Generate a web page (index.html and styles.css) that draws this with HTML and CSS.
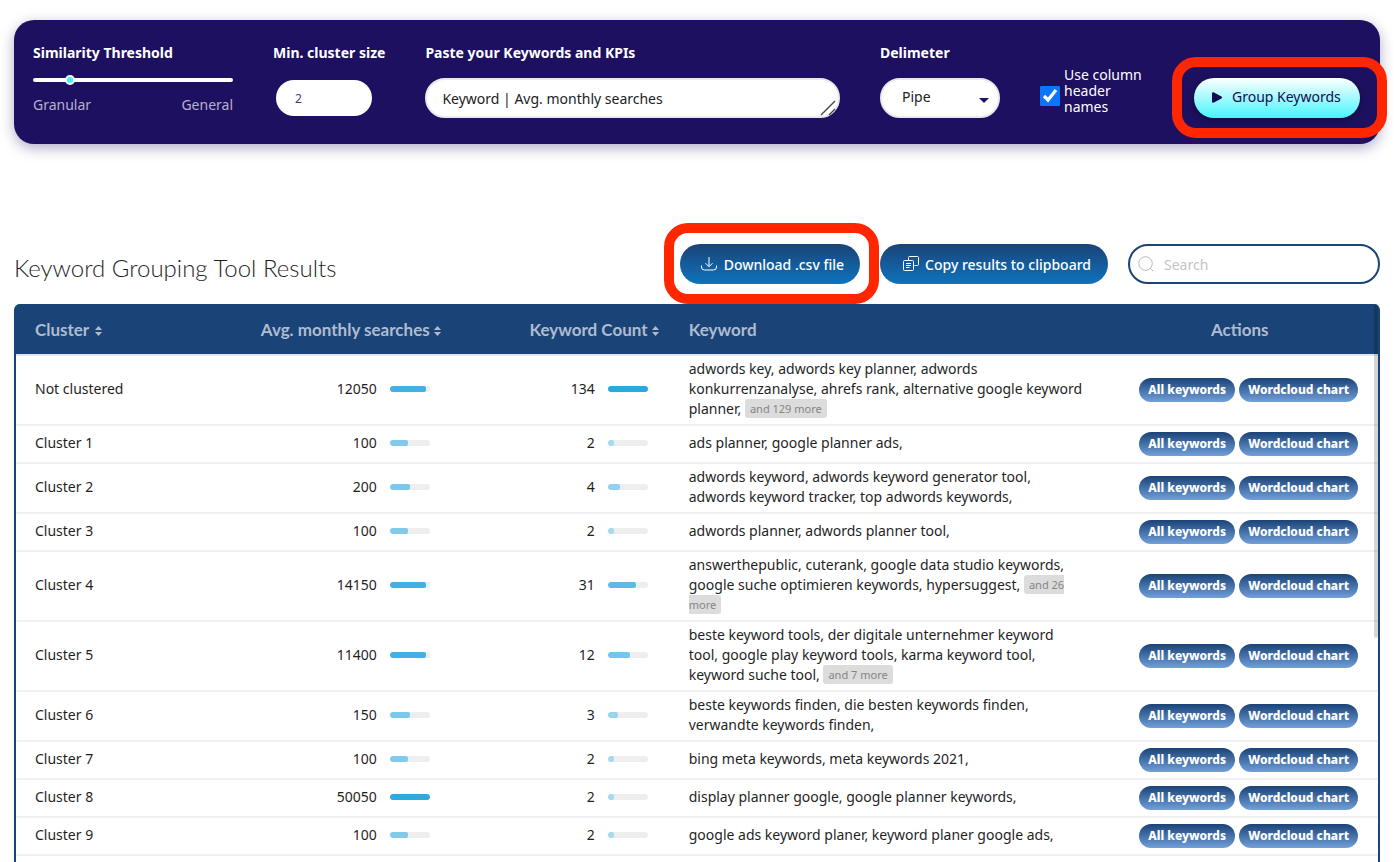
FILE: index.html
```html
<!DOCTYPE html>
<html lang="en">
<head>
<meta charset="utf-8">
<title>Keyword Grouping Tool</title>
<link rel="stylesheet" href="styles.css">
</head>
<body>
<form class="panel">
  <div class="field field-threshold">
    <label class="label" for="threshold">Similarity Threshold</label>
    <input class="slider" id="threshold" type="range" min="0" max="100" value="17">
    <div class="scale"><span>Granular</span><span>General</span></div>
  </div>
  <div class="field">
    <label class="label" for="size">Min. cluster size</label>
    <input class="size" id="size" type="text" value="2">
  </div>
  <div class="field field-keywords">
    <label class="label" for="keywords">Paste your Keywords and KPIs</label>
    <div class="area-wrap">
      <textarea class="area" id="keywords" rows="1">Keyword | Avg. monthly searches</textarea>
      <svg class="grip" viewBox="0 0 18 18" aria-hidden="true"><path d="M1 16 15 2M9 16l6-6"/></svg>
    </div>
  </div>
  <div class="field field-delimiter">
    <label class="label" for="delimiter">Delimeter</label>
    <div class="select-wrap">
      <select class="select" id="delimiter"><option>Pipe</option><option>Comma</option></select>
      <svg class="caret" viewBox="0 0 10 5" aria-hidden="true"><path d="M0 0h10L5 5z"/></svg>
    </div>
  </div>
  <div class="check">
    <input class="tick" id="headers" type="checkbox" checked>
    <label for="headers">Use column header names</label>
  </div>
  <div class="marked marked-group">
    <button class="group-button" type="button">
      <svg class="play" viewBox="0 0 10 11" aria-hidden="true"><path d="M1 1.2v8.6L9 5.5z"/></svg>
      Group Keywords
    </button>
  </div>
</form>

<header class="toolbar">
  <h2 class="title">Keyword Grouping Tool Results</h2>
  <div class="marked marked-download">
    <button class="blue-button" type="button">
      <svg class="icon" viewBox="0 0 16 16" aria-hidden="true"><path d="M8 1v9.500M4.500 7.200 8 10.700l3.500-3.500M.5 9.500v1.500a3 3 0 0 0 3 3h9a3 3 0 0 0 3-3V9.500"/></svg>
      <span>Download .csv file</span>
    </button>
  </div>
  <button class="blue-button copy-button" type="button">
    <svg class="icon" viewBox="0 0 16 16" aria-hidden="true"><path d="M5.500 4V1.500a1 1 0 0 1 1-1h8a1 1 0 0 1 1 1v7a1 1 0 0 1-1 1H11.500M1.500 4.500H9.500a1 1 0 0 1 1 1v8a1 1 0 0 1-1 1h-8a1 1 0 0 1-1-1v-8a1 1 0 0 1 1-1zM3 7.500h5M3 9.500h5M3 11.500h3.500"/></svg>
    <span>Copy results to clipboard</span>
  </button>
  <div class="search">
    <svg class="lens" viewBox="0 0 16 16" aria-hidden="true"><circle cx="7.500" cy="7.500" r="6.800"/><path d="M12.300 12.300l2.700 2.700"/></svg>
    <input class="search-input" type="search" placeholder="Search" aria-label="Search">
  </div>
</header>

<main class="results">
  <table class="table">
    <colgroup><col class="narrow"><col class="narrow"><col class="narrow"><col class="wide"><col class="actions-col"></colgroup>
    <thead>
      <tr>
        <th>Cluster <svg class="sort sort-spaced" viewBox="0 0 7 10"><path d="M0 4h7L3.500 0zM0 6h7L3.500 10z"/></svg></th>
        <th class="right">Avg. monthly searches <svg class="sort" viewBox="0 0 7 10"><path d="M0 4h7L3.500 0zM0 6h7L3.500 10z"/></svg></th>
        <th class="right">Keyword Count <svg class="sort" viewBox="0 0 7 10"><path d="M0 4h7L3.500 0zM0 6h7L3.500 10z"/></svg></th>
        <th>Keyword</th>
        <th class="center">Actions</th>
      </tr>
    </thead>
    <tbody id="rows"></tbody>
  </table>
  <div class="scroll-thumb"></div>
</main>
<script src="rows.js"></script>
</body>
</html>
```
FILE: rows.js
```js
// name, searches, bar width, bar colour, keyword count, bar width, bar colour, keywords, remaining
const rows = [
  ["Not clustered", 12050, 90, "#42b0e6", 134, 100, "#29a8e2", "adwords key, adwords key planner, adwords konkurrenzanalyse, ahrefs rank, alternative google keyword planner,", 129],
  ["Cluster 1", 100, 45, "#82caec", 2, 15, "#a6daf0", "ads planner, google planner ads,", 0],
  ["Cluster 2", 200, 50, "#7cc7ec", 4, 30, "#92d1ee", "adwords keyword, adwords keyword generator tool, adwords keyword tracker, top adwords keywords,", 0],
  ["Cluster 3", 100, 45, "#82caec", 2, 15, "#a6daf0", "adwords planner, adwords planner tool,", 0],
  ["Cluster 4", 14150, 90, "#42b0e6", 31, 70, "#5fb9e7", "answerthepublic, cuterank, google data studio keywords, google suche optimieren keywords, hypersuggest,", 26],
  ["Cluster 5", 11400, 90, "#42b0e6", 12, 55, "#76c4eb", "beste keyword tools, der digitale unternehmer keyword tool, google play keyword tools, karma keyword tool, keyword suche tool,", 7],
  ["Cluster 6", 150, 50, "#7cc7ec", 3, 25, "#98d4ef", "beste keywords finden, die besten keywords finden, verwandte keywords finden,", 0],
  ["Cluster 7", 100, 45, "#82caec", 2, 15, "#a6daf0", "bing meta keywords, meta keywords 2021,", 0],
  ["Cluster 8", 50050, 100, "#2fa9e3", 2, 15, "#a6daf0", "display planner google, google planner keywords,", 0],
  ["Cluster 9", 100, 45, "#82caec", 2, 15, "#a6daf0", "google ads keyword planer, keyword planer google ads,", 0]
];

const metric = (value, width, colour) =>
  `<td><div class="metric">${value}<span class="bar"><span class="fill" style="width:${width}%;background:${colour}"></span></span></div></td>`;

document.getElementById("rows").innerHTML = rows.map(r => `
  <tr>
    <td>${r[0]}</td>
    ${metric(r[1], r[2], r[3])}
    ${metric(r[4], r[5], r[6])}
    <td class="words">${r[7]} ${r[8] ? `<span class="more">and ${r[8]} more</span>` : ""}</td>
    <td class="actions"><div class="pills"><button class="pill" type="button">All keywords</button><button class="pill" type="button">Wordcloud chart</button></div></td>
  </tr>`).join("");
```
FILE: styles.css
```css
*, ::before, ::after { box-sizing: border-box; }

body {
  display: flex;
  flex-direction: column;
  min-height: 100vh;
  margin: 0;
  padding: 20px 20px 0 14px;
  background: #fff;
  color: #1f1f1f;
  font: 14px/20px "Noto Sans", sans-serif;
}

button, input, select, textarea { margin: 0; font: inherit; }

/* Settings panel */
.panel {
  display: flex;
  gap: 40px;
  padding: 23px 20px 26px 19px;
  border-radius: 20px;
  background: #1d1060;
  color: #fff;
  box-shadow: 0 4px 14px rgba(29, 16, 96, .35);
}
.field { display: flex; flex-direction: column; gap: 15px; flex: none; }
.field-threshold { width: 200px; }
.field-keywords { flex: 1; min-width: 0; }
.field-delimiter { width: 120px; }
.label { font-weight: 700; white-space: nowrap; }

.slider {
  appearance: none;
  width: 100%;
  height: 4px;
  border-radius: 2px;
  background: #fff;
}
.slider::-webkit-slider-thumb {
  appearance: none;
  width: 10px;
  height: 10px;
  border: 2px solid #fff;
  border-radius: 50%;
  background: #3ef3fb;
}
.scale { display: flex; justify-content: space-between; margin-top: -2px; color: #b5b0cd; }

.size {
  width: 96px;
  height: 36px;
  margin: 2px 3px;
  padding: 0 19px;
  border: 0;
  border-radius: 18px;
  background: #fff;
  color: #463a86;
  font-size: 12px;
}
.area-wrap, .select-wrap { position: relative; display: flex; }
.area {
  width: 100%;
  height: 40px;
  padding: 9px 15px;
  border: 2px solid #e9e9ec;
  border-radius: 20px;
  background: #fff;
  color: #222;
  overflow: hidden;
  resize: none;
}
.grip {
  position: absolute;
  right: 2px;
  bottom: 1px;
  width: 18px;
  height: 18px;
  fill: none;
  stroke: #444;
  stroke-width: 1.4;
}
.select {
  appearance: none;
  width: 100%;
  height: 40px;
  padding: 0 20px 2px;
  border: 2px solid #e9e9ec;
  border-radius: 20px;
  background: #fff;
  color: #222;
}
.caret {
  position: absolute;
  right: 11px;
  top: 20px;
  width: 10px;
  height: 5px;
  fill: #1d1060;
}
.check {
  display: flex;
  align-items: center;
  gap: 4px;
  width: 114px;
  margin-top: 24px;
  height: 48px;
  line-height: 16px;
}
.tick { flex: none; width: 20px; height: 20px; margin-top: 10px; accent-color: #0a75ff; }

.marked { position: relative; flex: none; }
.marked::after {
  content: "";
  position: absolute;
  top: -21px;
  z-index: 1;
  width: 215px;
  height: 81px;
  border: 10px solid #ff2600;
  border-radius: 24px;
  pointer-events: none;
}
.marked-group { align-self: flex-start; margin-top: 35px; }
.marked-group::after { left: -22px; }
.marked-download::after { left: -16px; }

.group-button {
  display: flex;
  align-items: center;
  gap: 10px;
  width: 166px;
  height: 40px;
  padding: 0 0 2px 18px;
  border: 0;
  border-radius: 20px;
  background: linear-gradient(#fff, #45f5fc);
  color: #150a52;
  white-space: nowrap;
  box-shadow: 0 2px 6px rgba(0, 0, 0, .4);
}
.play { width: 10px; height: 11px; fill: #150a52; stroke: #150a52; stroke-width: 2; stroke-linejoin: round; }

/* Results heading */
.toolbar {
  display: flex;
  align-items: center;
  gap: 20px;
  margin: 100px 0 20px;
}
.title {
  flex: 1;
  margin: 8px 0 0;
  font: 300 24px/32px Lato, sans-serif;
}
.blue-button {
  display: flex;
  align-items: center;
  gap: 7px;
  height: 40px;
  padding: 0 16px 0 21px;
  border: 0;
  border-radius: 20px;
  background: linear-gradient(#1a4377, #0e73bd);
  color: #fff;
  font-weight: 500;
  white-space: nowrap;
}
.blue-button span { padding-top: 2px; }
.copy-button { gap: 6px; padding-left: 23px; padding-right: 17px; }
.icon { width: 16px; height: 16px; fill: none; stroke: #fff; }
.search {
  display: flex;
  align-items: center;
  gap: 10px;
  width: 252px;
  height: 40px;
  padding: 0 8px;
  border: 2px solid #1a4377;
  border-radius: 20px;
}
.lens { flex: none; width: 16px; height: 16px; fill: none; stroke: #b9b9b9; }
.search-input { width: 100%; min-width: 0; padding: 1px 0 0; border: 0; outline: 0; background: none; }
.search-input::placeholder { color: #c4c4c4; }

/* Results table */
.results {
  position: relative;
  flex: 1;
  border: 2px solid #1a4377;
  border-width: 0 2px;
  border-radius: 6px 6px 0 0;
  background: #fff;
}
.table { width: 100%; table-layout: fixed; border-collapse: separate; border-spacing: 0; }
.narrow { width: 16%; }
.wide { width: 32%; }
.actions-col { width: 20%; }
th {
  height: 52px;
  padding: 2px 11px 0 19px;
  border-bottom: 2px solid #e4e6ea;
  background: #1a4377;
  color: #aebcd0;
  font: 700 17px/20px Lato, sans-serif;
  text-align: left;
  white-space: nowrap;
}
th:first-child { border-top-left-radius: 4px; }
th:last-child { border-top-right-radius: 4px; }
th.right { padding-left: 0; text-align: right; }
th.center { padding: 2px 4px 0 0; text-align: center; }
.sort { width: 7px; height: 10px; fill: #aebcd0; }
.sort-spaced { margin-left: 2px; }
td { height: 38px; padding: 3px 22px 5px 19px; border-bottom: 2px solid #f1f1f2; }
.metric { display: flex; align-items: center; justify-content: flex-end; gap: 13px; }
.bar { width: 40px; height: 6px; border-radius: 3px; background: #eee; overflow: hidden; }
.fill { display: block; height: 100%; border-radius: 2px; }
.more {
  padding: 2px 5px;
  border-radius: 3px;
  background: #dcdcdc;
  color: #858585;
  font-size: 11px;
  line-height: 11px;
  vertical-align: 1px;
}
td.actions { padding: 4px 20px 4px 0; }
.pills { display: flex; justify-content: flex-end; gap: 4px; }
.pill {
  height: 24px;
  padding: 0 9px;
  border: 0;
  border-radius: 12px;
  background: linear-gradient(#1a4377, #719fd9);
  color: #fff;
  font-size: 12px;
  font-weight: 800;
  line-height: 16px;
  white-space: nowrap;
}
.scroll-thumb {
  position: absolute;
  top: 0;
  right: 0;
  width: 4px;
  height: 334px;
  border-radius: 2px;
  background: rgba(0, 0, 0, .16);
}
```
